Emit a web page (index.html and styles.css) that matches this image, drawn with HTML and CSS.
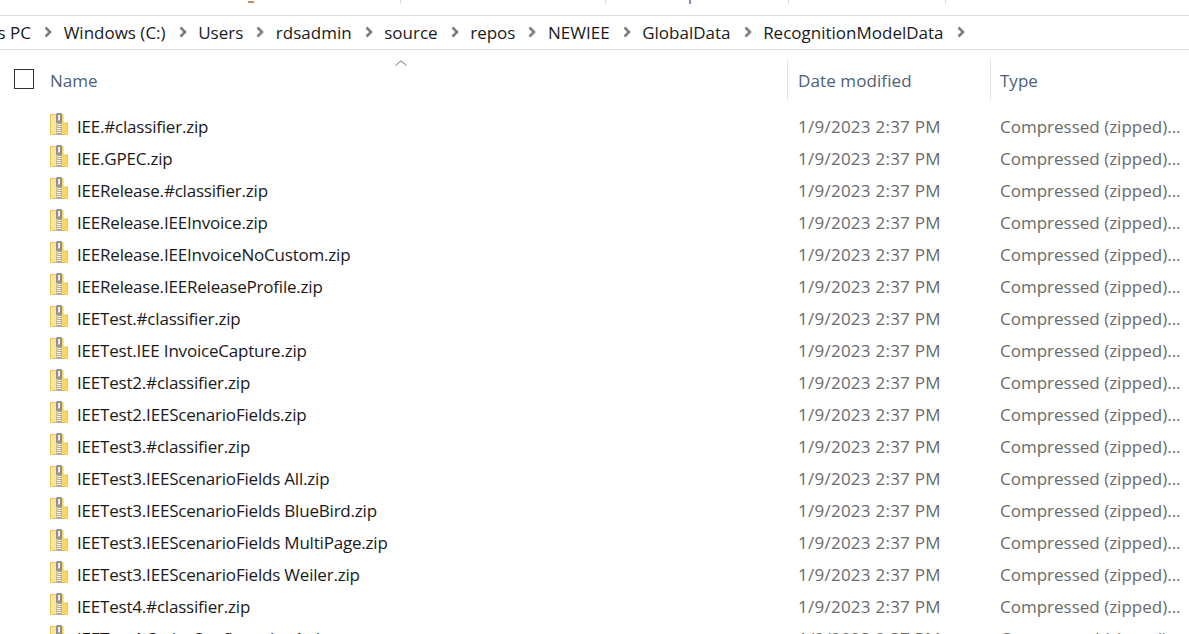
FILE: index.html
```html
<!DOCTYPE html>
<html lang="en">
<head>
<meta charset="utf-8">
<title>RecognitionModelData</title>
<link rel="stylesheet" href="styles.css">
</head>
<body>
<svg class="defs" width="0" height="0" aria-hidden="true">
  <symbol id="zip" viewBox="0 0 18 22">
    <path d="M.5 1.500h6.500v20H.5z" fill="#fce597" stroke="#e8c75a"/>
    <path d="M11.500 1.500h1.500v8.500h4.500v11.500H11.500z" fill="#fad766" stroke="#e8c75a"/>
    <rect x="6" y="0" width="6" height="10" rx="1.500" fill="#8f8f8f"/>
    <rect x="8" y="2" width="2" height="5.500" fill="#ececec"/>
    <path d="M6.500 10h5v12h-5z" fill="#a8a89a"/>
    <path d="M7 11.500h4M7 13.500h4M7 15.500h4M7 17.500h4M7 19.500h4" stroke="#f7f7f7"/>
  </symbol>
  <symbol id="chev" viewBox="0 0 8 12">
    <path d="M1.500 1.500 6 6l-4.500 4.500" fill="none" stroke="#7d7d7d" stroke-width="2.600"/>
  </symbol>
</svg>
<div class="ribbon">
  <span class="glyph"></span>
  <span class="tick t1"></span><span class="tick t2"></span><span class="tick t3"></span><span class="tick t4"></span><span class="tick t5"></span>
</div>
<nav class="crumbs">
  <span>This PC</span>
  <svg class="chev"><use href="#chev"/></svg><span>Windows (C:)</span>
  <svg class="chev"><use href="#chev"/></svg><span>Users</span>
  <svg class="chev"><use href="#chev"/></svg><span>rdsadmin</span>
  <svg class="chev"><use href="#chev"/></svg><span>source</span>
  <svg class="chev"><use href="#chev"/></svg><span>repos</span>
  <svg class="chev"><use href="#chev"/></svg><span>NEWIEE</span>
  <svg class="chev"><use href="#chev"/></svg><span>GlobalData</span>
  <svg class="chev"><use href="#chev"/></svg><span>RecognitionModelData</span>
  <svg class="chev"><use href="#chev"/></svg>
</nav>
<div class="head">
  <div class="hname"><span class="check"></span><span class="hlabel">Name</span><svg class="sort" viewBox="0 0 12 6"><path d="M.5 5.500 6 .8l5.500 4.700" fill="none" stroke="#6f6f6f"/></svg></div>
  <div class="hcol hdate">Date modified</div>
  <div class="hcol htype">Type</div>
</div>
<div class="rows">
  <div class="row"><svg class="zip"><use href="#zip"/></svg><span class="n">IEE.#classifier.zip</span><span class="d">1/9/2023 2:37 PM</span><span class="t">Compressed (zipped)...</span></div>
  <div class="row"><svg class="zip"><use href="#zip"/></svg><span class="n">IEE.GPEC.zip</span><span class="d">1/9/2023 2:37 PM</span><span class="t">Compressed (zipped)...</span></div>
  <div class="row"><svg class="zip"><use href="#zip"/></svg><span class="n">IEERelease.#classifier.zip</span><span class="d">1/9/2023 2:37 PM</span><span class="t">Compressed (zipped)...</span></div>
  <div class="row"><svg class="zip"><use href="#zip"/></svg><span class="n">IEERelease.IEEInvoice.zip</span><span class="d">1/9/2023 2:37 PM</span><span class="t">Compressed (zipped)...</span></div>
  <div class="row"><svg class="zip"><use href="#zip"/></svg><span class="n">IEERelease.IEEInvoiceNoCustom.zip</span><span class="d">1/9/2023 2:37 PM</span><span class="t">Compressed (zipped)...</span></div>
  <div class="row"><svg class="zip"><use href="#zip"/></svg><span class="n">IEERelease.IEEReleaseProfile.zip</span><span class="d">1/9/2023 2:37 PM</span><span class="t">Compressed (zipped)...</span></div>
  <div class="row"><svg class="zip"><use href="#zip"/></svg><span class="n">IEETest.#classifier.zip</span><span class="d">1/9/2023 2:37 PM</span><span class="t">Compressed (zipped)...</span></div>
  <div class="row"><svg class="zip"><use href="#zip"/></svg><span class="n">IEETest.IEE InvoiceCapture.zip</span><span class="d">1/9/2023 2:37 PM</span><span class="t">Compressed (zipped)...</span></div>
  <div class="row"><svg class="zip"><use href="#zip"/></svg><span class="n">IEETest2.#classifier.zip</span><span class="d">1/9/2023 2:37 PM</span><span class="t">Compressed (zipped)...</span></div>
  <div class="row"><svg class="zip"><use href="#zip"/></svg><span class="n">IEETest2.IEEScenarioFields.zip</span><span class="d">1/9/2023 2:37 PM</span><span class="t">Compressed (zipped)...</span></div>
  <div class="row"><svg class="zip"><use href="#zip"/></svg><span class="n">IEETest3.#classifier.zip</span><span class="d">1/9/2023 2:37 PM</span><span class="t">Compressed (zipped)...</span></div>
  <div class="row"><svg class="zip"><use href="#zip"/></svg><span class="n">IEETest3.IEEScenarioFields All.zip</span><span class="d">1/9/2023 2:37 PM</span><span class="t">Compressed (zipped)...</span></div>
  <div class="row"><svg class="zip"><use href="#zip"/></svg><span class="n">IEETest3.IEEScenarioFields BlueBird.zip</span><span class="d">1/9/2023 2:37 PM</span><span class="t">Compressed (zipped)...</span></div>
  <div class="row"><svg class="zip"><use href="#zip"/></svg><span class="n">IEETest3.IEEScenarioFields MultiPage.zip</span><span class="d">1/9/2023 2:37 PM</span><span class="t">Compressed (zipped)...</span></div>
  <div class="row"><svg class="zip"><use href="#zip"/></svg><span class="n">IEETest3.IEEScenarioFields Weiler.zip</span><span class="d">1/9/2023 2:37 PM</span><span class="t">Compressed (zipped)...</span></div>
  <div class="row"><svg class="zip"><use href="#zip"/></svg><span class="n">IEETest4.#classifier.zip</span><span class="d">1/9/2023 2:37 PM</span><span class="t">Compressed (zipped)...</span></div>
  <div class="row"><svg class="zip"><use href="#zip"/></svg><span class="n">IEETest4.OrderConfirmation1.zip</span><span class="d">1/9/2023 2:37 PM</span><span class="t">Compressed (zipped)...</span></div>
</div>
</body>
</html>
```
FILE: styles.css
```css
html, body {
  margin: 0;
  height: 634px;
  overflow: hidden;
  background: #fff;
}
body {
  font-family: "Open Sans", "Noto Sans", sans-serif;
  font-size: 17px;
  color: #1a1a1a;
}
.defs { position: absolute; }
.ribbon {
  height: 15px;
  border-bottom: 1px solid #dedede;
  display: flex;
  align-items: flex-start;
}
.glyph {
  width: 6px;
  height: 2px;
  margin: 1px 0 0 248px;
  background: #c98a55;
}
.tick { width: 1px; height: 4px; background: #d9d9d9; }
.t1 { margin-left: 146px; }
.t2 { margin-left: 204px; }
.t3 { margin-left: 83px; width: 1.5px; background: linear-gradient(90deg, #d98a4a, #5b8fd0); }
.t4 { margin-left: 97px; }
.t5 { margin-left: 156px; }
.crumbs {
  height: 32px;
  padding-bottom: 1px;
  border-bottom: 1px solid #dedede;
  display: flex;
  align-items: center;
  white-space: nowrap;
  margin-left: -26.5px;
}
.chev { width: 8px; height: 12px; margin: 0 11.6px 0 13px; flex: none; }
.head {
  height: 60px;
  display: flex;
  color: #4c607a;
}
.hname {
  width: 787px;
  height: 59px;
  box-sizing: border-box;
  padding: 19px 0 0 14px;
  display: flex;
  align-items: flex-start;
  position: relative;
}
.check {
  width: 18px;
  height: 18px;
  border: 1px solid #333;
  margin-right: 16px;
}
.sort { position: absolute; left: 395px; top: 10px; width: 12px; height: 6px; }
.hcol {
  border-left: 1px solid #e3e3e3;
  height: 41px;
  margin-top: 9px;
  padding: 10px 0 0 9px;
  box-sizing: border-box;
}
.hdate { width: 203px; padding-left: 10px; letter-spacing: 0.1px; }
.htype { width: 199px; }
.rows { display: flex; flex-direction: column; }
.row {
  height: 32px;
  flex: none;
  display: flex;
  align-items: center;
  white-space: nowrap;
  color: #6a6a6a;
}
.zip { width: 18px; height: 22px; margin-left: 50px; margin-bottom: 4px; flex: none; }
.n { width: 721px; margin-left: 9px; color: #1a1a1a; letter-spacing: -0.2px; flex: none; }
.d { width: 202px; letter-spacing: 0.25px; flex: none; }
.t { flex: none; }
```
